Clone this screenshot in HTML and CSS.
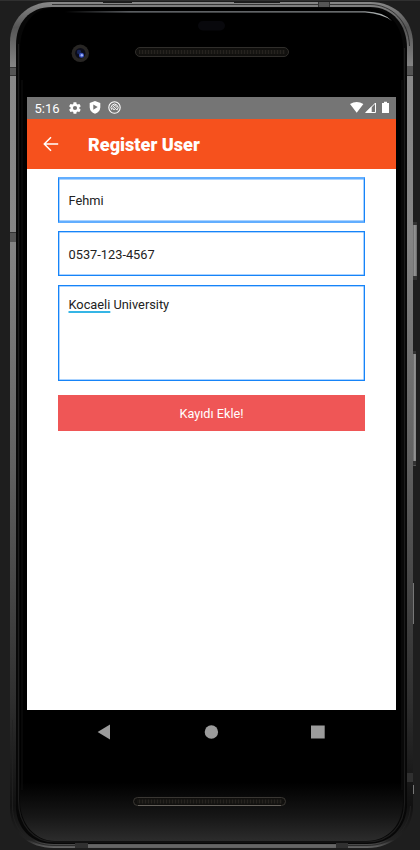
FILE: index.html
```html
<!DOCTYPE html>
<html lang="tr">
<head>
<meta charset="utf-8">
<title>Register User</title>
<link rel="stylesheet" href="styles.css">
</head>
<body>
<main class="device">
  <svg class="shell" width="420" height="850" viewBox="0 0 420 850" aria-hidden="true">
    <defs>
      <linearGradient id="metal" x1="0" y1="0" x2="0" y2="1">
        <stop offset="0" stop-color="#888"/><stop offset=".03" stop-color="#555"/><stop offset=".08" stop-color="#888"/><stop offset=".28" stop-color="#858585"/>
        <stop offset=".55" stop-color="#606060"/><stop offset=".82" stop-color="#303030"/>
        <stop offset=".95" stop-color="#111"/><stop offset=".99" stop-color="#222"/><stop offset="1" stop-color="#666"/>
      </linearGradient>
      <linearGradient id="chin" x1="0" y1="0" x2="0" y2="1">
        <stop offset="0" stop-color="#000"/><stop offset=".93" stop-color="#000"/>
        <stop offset=".97" stop-color="#161616"/><stop offset="1" stop-color="#2c2c2c"/>
      </linearGradient>
      <linearGradient id="shine">
        <stop offset="0" stop-color="#000"/><stop offset=".2" stop-color="#777b80"/>
        <stop offset=".9" stop-color="#8a8e90"/><stop offset="1" stop-color="#bbc0bf"/>
      </linearGradient>
      <linearGradient id="key"><stop offset="0" stop-color="#555"/><stop offset=".5" stop-color="#999"/><stop offset="1" stop-color="#666"/></linearGradient>
      <pattern id="mesh" width="3" height="6" patternUnits="userSpaceOnUse"><path fill="#171613" d="M0 0h3v6H0z"/><path stroke="#26231f" d="M1.5 0v6"/></pattern>
    </defs>
    <path stroke="#303030" d="M0 .5h420"/>
    <path fill="url(#key)" d="M413 222.500h4V280h-4zM412.500 351h3.500v114.500h-3.500z"/>
    <path fill="#333" d="M413 222h4v3h-4zM413 276h4v4h-4zM412 351h4v3h-4zM412 461h4v4h-4z"/>
    <path stroke="#777" d="M413.500 583v41M413.500 785v9"/>
    <path fill="url(#metal)" d="M52 2H370C396 2 413 20 413 44V807C413 830 393 848 367 848H54C28 848 10 832 10 808V42C10 20 27 2 52 2Z"/>
    <path fill="#070707" d="M52 7H370C393 7 407 25 407 48V804C407 827 391 844 367 844H54C31 844 16 828 16 806V45C16 23 29 7 52 7Z"/>
    <path fill="none" stroke="#222" stroke-width=".8" d="M52 4.500H370C392 4.500 409 22 409.500 46M12.500 720V806C12 830 29 845.500 54 845.500H367C392 845.500 410 829 410.500 806"/>
    <path fill="none" stroke="#1c1c1c" stroke-width="1.200" d="M18.500 44V800C18.500 826 34 842 55 842H367C390 842 404.500 825 404.500 803V48"/>
    <path fill="url(#chin)" d="M52 8H368C388 8 403 26 403 48V800C403 824 389 841 366 841H55C35 841 20 824 20 800V48C20 26 33 8 52 8Z"/>
    <path fill="none" stroke="#111" d="M22 80V790M402 80V790"/>
    <path fill="#555" d="M10 67h6v9h-6zM10 232h6v10h-6zM407 66h6v10h-6zM318 2h12v5h-12z"/>
    <path fill="#303030" d="M407 773h6v9h-6zM75 843h13v5H75zM336 843h12v5h-12z"/>
    <path fill="#333" d="M10 67h6v1h-6zM10 75h6v1h-6zM10 232h6v1h-6zM407 75h6v1h-6zM318 2h1v5h-1zM329 2h1v5h-1z"/>
    <path fill="#666" d="M88 844.300h248v3H88z"/>
    <path fill="#1c1c1c" d="M103 2h29v1h-29zM234 2h46v1h-46z"/>
    <path fill="url(#shine)" d="M65 11.200H365Q384 12 392 21Q382 13.500 365 12.500H65Z"/>
    <rect x="198" y="21" width="27" height="9.500" rx="4.700" fill="#08080c"/>
    <circle cx="80.300" cy="53.300" r="8.700" fill="#282624"/><circle cx="80.300" cy="53.300" r="5.200" fill="#0b0c19"/>
    <circle cx="79" cy="52" r="2.200" fill="#172456"/><circle cx="81.500" cy="55.200" r="2.500" fill="#3851bd"/><circle cx="81.800" cy="55.300" r="1.200" fill="#a3b4fa"/>
    <rect x="135.500" y="47.500" width="153" height="9" rx="4.500" fill="#11100e" stroke="#302e2b"/>
    <path fill="url(#mesh)" d="M139 50h146v4H139z"/>
    <rect x="133.500" y="797.500" width="152" height="8" rx="4" fill="#11100e" stroke="#3a3733"/>
    <path fill="url(#mesh)" d="M137 799.500h145v4H137z"/><path stroke="#65615b" d="M138 805.500h143"/>
  </svg>
  <section class="screen">
    <div class="status">
      <span class="clock">5:16</span>
      <svg class="gear" width="14" height="14" viewBox="0 0 24 24"><path fill="#fff" fill-rule="evenodd" d="M19.400 13c.1-.6.1-1.400 0-2l2.100-1.700c.2-.1.300-.4.100-.6l-2-3.500c-.1-.2-.4-.3-.6-.2l-2.500 1c-.5-.4-1.100-.7-1.700-1l-.4-2.600c0-.2-.2-.4-.5-.4h-4c-.3 0-.5.2-.5.400L9 5c-.6.300-1.200.6-1.700 1l-2.500-1c-.2-.1-.5 0-.6.200l-2 3.500c-.1.200-.1.500.1.600L4.500 11c-.1.600-.1 1.400 0 2l-2.200 1.700c-.2.100-.3.400-.1.600l2 3.500c.1.200.4.300.6.200l2.500-1c.5.400 1.100.7 1.700 1l.4 2.600c0 .2.200.4.500.4h4c.3 0 .5-.2.500-.4l.3-2.600c.6-.3 1.200-.6 1.700-1l2.500 1c.2.100.5 0 .6-.2l2-3.500c.1-.2.100-.5-.1-.6zM12 15.600a3.600 3.600 0 1 1 0-7.200 3.600 3.600 0 0 1 0 7.200"/></svg>
      <svg class="shield" width="12" height="13" viewBox="0 0 12 13"><path fill="#fff" fill-rule="evenodd" d="M6 0 11.300 2v4.400Q11 10.700 6 12.700 1 10.700.7 6.400V2ZM4.300 3.500v5.200L8.700 6.100Z"/></svg>
      <svg class="debug" width="13" height="13" viewBox="0 0 13 13" fill="none" stroke="#fff"><circle cx="6.500" cy="6.500" r="5.700" stroke-width="1.100"/><path stroke-width="1" d="M3.800 8.800A3.500 3.500 0 1 1 9.300 8.800M4.700 4.800 9 9.200M4.600 6.500a2 2 0 0 0 2.200 2.100M5.800 4.500a2 2 0 0 1 2.600 2"/></svg>
      <svg class="signals" width="40" height="13" viewBox="0 0 40 13"><path fill="#fff" d="M0 3Q6.700-1 13.400 3L6.700 11.800ZM32 2h2V.7h3V2h2v10h-7z"/><path fill="#fff" d="M15 12 21.700 5.300V12z"/><path fill="none" stroke="#fff" d="M16 11.500 25.500 2V11.500Z"/></svg>
    </div>
    <header class="bar">
      <svg class="back" width="16" height="16" viewBox="0 0 16 16" fill="none" stroke="#fff" stroke-width="1.500"><path d="M15.200 8H1.500M8 1.300 1.300 8 8 14.700"/></svg>
      <h1>Register User</h1>
    </header>
    <div class="form">
      <div class="field first">Fehmi</div>
      <div class="field second">0537-123-4567</div>
      <div class="field area"><span class="spell">Kocaeli</span> University</div>
      <button class="submit">Kayıdı Ekle!</button>
    </div>
  </section>
  <nav class="keys">
    <svg width="229" height="16" viewBox="0 0 229 16" fill="#9b9b9b"><path d="M.6 8 13 .5v15z"/><circle cx="114.400" cy="8" r="6.700"/><path d="M214 1.500h13.700v13H214z"/></svg>
  </nav>
</main>
</body>
</html>
```

FILE: styles.css
```css
* { box-sizing: border-box; }
body { margin: 0; background: #1e1e1e; font-family: Roboto, sans-serif; }
.device { position: relative; width: 420px; height: 850px; padding: 97px 24px 0 27px; overflow: hidden; }
.shell { position: absolute; left: 0; top: 0; }
.screen { position: relative; width: 369px; height: 613px; background: #fff; }
svg { display: block; flex: none; }
.status { height: 21.500px; background: #757575; display: flex; align-items: center; padding: 0 6px 0 7.500px; color: #fff; }
.clock { width: 33px; font-size: 13px; line-height: 21px; padding-top: 1px; }
.shield { margin-left: 7px; }
.debug { margin-left: 7px; }
.signals { margin-left: auto; }
.bar { height: 50.500px; background: #f6511d; display: flex; align-items: center; padding-left: 16px; }
.bar h1 { margin: 2px 0 0 29px; font-size: 18.100px; font-weight: 900; line-height: 24px; color: #fff; }
.form { padding: 5px 31px 0; display: flex; flex-direction: column; font-size: 12.800px; color: #222; }
.field { width: 307px; height: 45px; border: 1px solid #1684f8; box-shadow: inset 0 0 0 .5px #58a8ff; padding: 0 10px 0 9.500px; line-height: 44px; }
.first { margin-top: 3px; border-top: 2px solid #62aeff; border-bottom: 2px solid #62aeff; height: 46px; line-height: 44px; }
.second { margin-top: 8px; line-height: 45px; }
.area { margin-top: 8.500px; height: 96px; padding-top: 11px; line-height: 16px; }
.spell { text-decoration: underline #35b5e5 1.500px; text-underline-offset: 1.500px; text-decoration-skip-ink: none; }
.submit { margin: 14px 0 0; width: 307px; height: 36px; border: 0; padding: 2px 0 0; background: #ef5656; color: #fff; font: 12.700px Roboto, sans-serif; }
.keys { position: relative; padding: 13.500px 0 0 70px; }
```
